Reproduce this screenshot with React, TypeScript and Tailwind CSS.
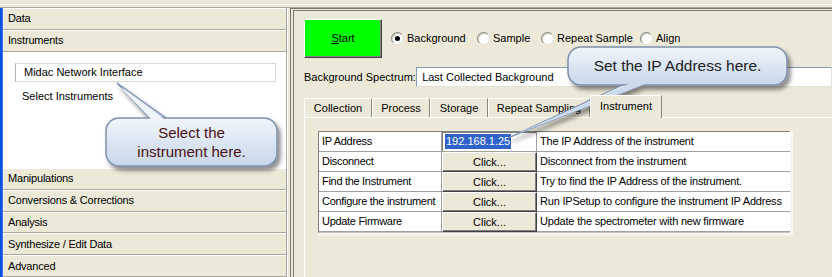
import React from "react";

const sections = ["Manipulations", "Conversions & Corrections", "Analysis", "Synthesize / Edit Data", "Advanced"];

const rows = [
  { name: "IP Address", value: "192.168.1.25", desc: "The IP Address of the instrument" },
  { name: "Disconnect", value: "Click...", desc: "Disconnect from the instrument" },
  { name: "Find the Instrument", value: "Click...", desc: "Try to find the IP Address of the instrument." },
  { name: "Configure the instrument", value: "Click...", desc: "Run IPSetup to configure the instrument IP Address" },
  { name: "Update Firmware", value: "Click...", desc: "Update the spectrometer with new firmware" },
];

const tabs = [
  { label: "Collection", w: "w-[68px]" },
  { label: "Process", w: "w-[58px]" },
  { label: "Storage", w: "w-[58px]" },
  { label: "Repeat Sampling", w: "w-[102px]" },
];

function Header({ label }: { label: string }) {
  return (
    <div className="h-[22px] flex items-center pl-[5px] border-t border-t-white border-b border-b-[#aca899] tracking-[-0.2px]">
      {label}
    </div>
  );
}

function Radio({ label, checked, w }: { label: string; checked?: boolean; w: string }) {
  return (
    <div className={`flex items-center gap-[3px] ${w}`}>
      <span className="w-[13px] h-[13px] rounded-full border border-t-[#8a8a84] border-l-[#8a8a84] border-b-[#e4e2d8] border-r-[#e4e2d8] bg-white flex items-center justify-center shadow-[inset_1px_1px_1px_#d0cec4]">
        {checked && <span className="w-[5px] h-[5px] rounded-full bg-black" />}
      </span>
      <span>{label}</span>
    </div>
  );
}

export default function App() {
  return (
    <div className="relative w-[832px] h-[277px] overflow-hidden bg-[#ece9d8] font-['Liberation_Sans',Arial,sans-serif] text-[11px] text-black leading-none">
      {/* window top edge */}
      <div className="h-[8px] flex flex-col">
        <div className="h-[4px]" />
        <div className="h-px bg-white" />
        <div className="h-[2px]" />
        <div className="h-px bg-[#aca899]" />
      </div>

      <div className="flex h-[269px]">
        <div className="w-[3px] bg-[#0a50e0] border-r border-[#3d7bf0]" />

        {/* left navigation */}
        <div className="w-[284px] flex flex-col border-r border-[#aca899]">
          <Header label="Data" />
          <Header label="Instruments" />
          <div className="h-[117px] bg-white pt-[11px] pl-[12px] pr-[10px]">
            <div className="h-[19px] flex items-center pl-[8px] border border-[#dcdbd2] border-l-[#b5b3a8]">
              Midac Network Interface
            </div>
            <div className="pl-[7px] mt-[9px]">Select Instruments</div>
          </div>
          {sections.map((s) => (
            <Header key={s} label={s} />
          ))}
        </div>

        {/* splitter */}
        <div className="w-[3px] border-l border-white" />

        {/* right panel */}
        <div className="flex-1 overflow-hidden border-l-[4px] border-double border-[#7b7867] border-t-[3px] border-t-[#7b7867] pl-[10px] pt-[8px]">
          <div className="flex items-center">
            <button className="w-[78px] h-[39px] bg-[#00ff00] border border-t-white border-l-white border-b-[#404040] border-r-[#404040] shadow-[inset_-1px_-1px_0_#808080] text-[11px]">
              <span className="underline">S</span>tart
            </button>
            <div className="flex items-center ml-[9px]">
              <Radio label="Background" checked w="w-[86px]" />
              <Radio label="Sample" w="w-[64px]" />
              <Radio label="Repeat Sample" w="w-[99px]" />
              <Radio label="Align" w="w-[60px]" />
            </div>
          </div>

          <div className="flex items-center mt-[9px]">
            <span className="w-[116px]">Background Spectrum:</span>
            <div className="w-[430px] h-[20px] bg-white border border-t-[#7f9db9] border-l-[#7f9db9] border-b-[#e4e2d8] border-r-[#e4e2d8] flex items-center pl-[5px]">
              Last Collected Background
            </div>
          </div>

          {/* tabs */}
          <div className="flex items-end h-[22px] mt-[8px]">
            {tabs.map((t) => (
              <div
                key={t.label}
                className={`${t.w} h-[19px] flex items-center justify-center border-t border-l border-white border-r border-r-[#8a8775] rounded-tl-[2px]`}
              >
                {t.label}
              </div>
            ))}
            <div className="w-[72px] h-[23px] -mb-px relative z-10 bg-[#ece9d8] flex items-center justify-center pb-[2px] border-t border-l border-white border-r border-r-[#8a8775] rounded-tl-[2px]">
              Instrument
            </div>
          </div>

          <div className="w-[560px] h-[200px] border-t border-l border-white pl-[13px] pt-[13px]">
            <div className="w-[475px] border-b-[3px] border-r-[3px] border-[#f6f5ef]">
              <div className="border-t border-l border-[#808080] border-b border-r border-b-[#c8c6bb] border-r-[#c8c6bb]">
                {rows.map((r, i) => (
                  <div key={r.name} className="grid grid-cols-[123px_95px_253px] h-[20px]">
                    <div className="flex items-center pl-[3px] bg-white border-r border-b border-[#a0a0a0] tracking-[-0.3px]">
                      {r.name}
                    </div>
                    {i === 0 ? (
                      <div className="flex items-center pl-[3px] bg-white border-b border-r border-[#a0a0a0] shadow-[inset_1px_1px_0_#808080]">
                        <span className="bg-[#2f63c9] text-white px-px py-[2px]">{r.value}</span>
                      </div>
                    ) : (
                      <div className="flex items-center justify-center bg-[#ece9d8] border-t border-l border-white border-b border-r border-b-[#404040] border-r-[#404040] shadow-[inset_-1px_-1px_0_#808080]">
                        {r.value}
                      </div>
                    )}
                    <div className="flex items-center pl-[3px] bg-white border-b border-[#a0a0a0] tracking-[-0.2px]">
                      {r.desc}
                    </div>
                  </div>
                ))}
              </div>
            </div>
          </div>
        </div>
      </div>

      {/* callouts */}
      <svg className="absolute inset-0 pointer-events-none" width="832" height="277">
        <defs>
          <linearGradient id="bub" x1="0" y1="0" x2="0" y2="1">
            <stop offset="0" stopColor="#f1f5fb" />
            <stop offset="0.5" stopColor="#dce6f3" />
            <stop offset="1" stopColor="#c8d7ea" />
          </linearGradient>
          <filter id="sh" x="-10%" y="-20%" width="130%" height="160%">
            <feDropShadow dx="3" dy="4" stdDeviation="2.2" floodColor="#000" floodOpacity="0.45" />
          </filter>
        </defs>
        <g filter="url(#sh)">
          <polygon points="117,83 152,121 170,121" fill="url(#bub)" stroke="#7d90ad" strokeWidth="1.2" />
          <rect x="106" y="118" width="171" height="48" rx="13" fill="url(#bub)" stroke="#7d90ad" strokeWidth="1.5" />
          <polygon points="119,86 154,122 168,122" fill="#eef3fa" />
        </g>
        <g filter="url(#sh)">
          <polygon points="508,138 627,83 647,83" fill="url(#bub)" stroke="#7d90ad" strokeWidth="1.2" />
          <rect x="568" y="47" width="219" height="38" rx="13" fill="url(#bub)" stroke="#7d90ad" strokeWidth="1.5" />
          <polygon points="512,136 629,84 645,84" fill="#ccdaec" />
        </g>
      </svg>
      <div className="absolute left-[106px] top-[118px] w-[171px] h-[48px] flex flex-col items-center justify-center text-[15px] leading-[19px] text-[#4a1010]">
        <span>Select the</span>
        <span>instrument here.</span>
      </div>
      <div className="absolute left-[568px] top-[47px] w-[219px] h-[38px] flex items-center justify-center text-[15.5px] text-[#202020]">
        Set the IP Address here.
      </div>
    </div>
  );
}
